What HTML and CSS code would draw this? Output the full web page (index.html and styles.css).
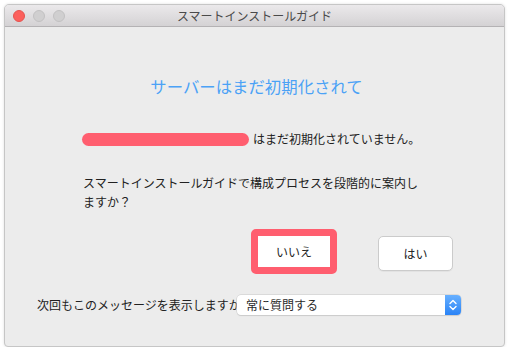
FILE: index.html
```html
<!DOCTYPE html>
<html lang="ja">
<head>
<meta charset="utf-8">
<title>スマートインストールガイド</title>
<link rel="stylesheet" href="styles.css">
</head>
<body>
<div class="window">
  <div class="titlebar">
    <div class="lights">
      <span class="light red"></span>
      <span class="light gray"></span>
      <span class="light gray"></span>
    </div>
    <div class="title">スマートインストールガイド</div>
  </div>
  <div class="content">
    <h1 class="heading">サーバーはまだ初期化されて</h1>
    <div class="status-row">
      <span class="redact"></span>
      <span class="status-text">はまだ初期化されていません。</span>
    </div>
    <p class="question">スマートインストールガイドで構成プロセスを段階的に案内しますか？</p>
    <div class="buttons">
      <div class="highlight"><button class="btn btn-no">いいえ</button></div>
      <button class="btn btn-yes">はい</button>
    </div>
    <div class="option-row">
      <span class="option-label">次回もこのメッセージを表示しますか</span>
      <div class="select">
        <span class="select-value">常に質問する</span>
        <span class="select-arrow">
          <svg width="16" height="20" viewBox="0 0 16 20"><path d="M5 8.5 L8 5.5 L11 8.5 M5 11.5 L8 14.5 L11 11.5" fill="none" stroke="#fff" stroke-width="1.4" stroke-linecap="round" stroke-linejoin="round"/></svg>
        </span>
      </div>
    </div>
  </div>
</div>
</body>
</html>
```
FILE: styles.css
```css
* { box-sizing: border-box; }
html, body { margin: 0; padding: 0; background: #ffffff; }
body {
  font-family: "Noto Sans CJK JP", "Noto Sans", sans-serif;
  color: #222;
  font-size: 12px;
}
.window {
  margin: 4px 0 0 4px;
  width: 501px;
  height: 343px;
  background: #ececec;
  border: 1px solid #c6c6c6;
  border-radius: 5px 5px 4px 4px;
  box-shadow: 0 0 3px rgba(0,0,0,0.12);
  overflow: hidden;
}
.titlebar {
  position: relative;
  height: 22px;
  background: linear-gradient(#ebe9eb, #d4d2d4);
  border-bottom: 1px solid #b4b2b4;
  display: flex;
  align-items: center;
}
.lights {
  display: flex;
  gap: 8px;
  padding-left: 8px;
  padding-top: 1px;
}
.light {
  width: 12px;
  height: 12px;
  border-radius: 50%;
}
.light.red { background: #fc605c; border: 1px solid #e5534f; }
.light.gray { background: #d0cfd0; border: 1px solid #c2c1c2; }
.title {
  position: absolute;
  left: 0; right: 0; top: 0;
  line-height: 22px;
  text-align: center;
  font-size: 12px;
  color: #4a4a4a;
}
.content {
  display: flex;
  flex-direction: column;
  padding-top: 51px;
}
.heading {
  margin: 0;
  font-size: 16.4px;
  line-height: 16px;
  font-weight: normal;
  color: #4ba2f6;
  text-align: center;
  padding-left: 4px;
}
.status-row {
  display: flex;
  align-items: center;
  gap: 4px;
  margin-top: 37px;
  padding-left: 77px;
  height: 16px;
}
.redact {
  width: 167px;
  height: 13px;
  border-radius: 7px;
  background: #ff5e6f;
}
.status-text { line-height: 16px; }
.question {
  margin: 26px 0 0 0;
  padding-left: 78px;
  width: 420px;
  line-height: 19px;
}
.buttons {
  display: flex;
  align-items: flex-start;
  gap: 41px;
  margin-top: 18px;
  padding-left: 246px;
}
.highlight {
  width: 86px;
  height: 45px;
  border: 7px solid #ff5e6f;
  border-radius: 5px;
  background: #fff;
  display: flex;
}
.btn {
  font-family: inherit;
  font-size: 12px;
  color: #222;
  background: #fff;
  padding: 0;
  cursor: default;
}
.btn-no {
  flex: 1;
  border: none;
  background: #fff;
}
.btn-yes {
  margin-top: 7px;
  width: 75px;
  height: 35px;
  border: 1px solid #cbcbcb;
  border-radius: 5px;
  box-shadow: 0 1px 0 rgba(0,0,0,0.04);
}
.option-row {
  display: flex;
  align-items: center;
  margin-top: 21px;
  padding-left: 32px;
  height: 20px;
}
.option-label {
  width: 200px;
  overflow: hidden;
  white-space: nowrap;
  line-height: 20px;
}
.select {
  display: flex;
  width: 224px;
  height: 20px;
  background: #fff;
  border-radius: 4px;
  box-shadow: 0 0 0 0.5px #c8c8c8, 0 1px 1px rgba(0,0,0,0.12);
  overflow: hidden;
}
.select-value {
  flex: 1;
  padding-left: 9px;
  line-height: 20px;
  color: #2a2a2a;
}
.select-arrow {
  width: 16px;
  height: 20px;
  background: linear-gradient(#67b0ff, #2a83f6);
  display: flex;
}
```
